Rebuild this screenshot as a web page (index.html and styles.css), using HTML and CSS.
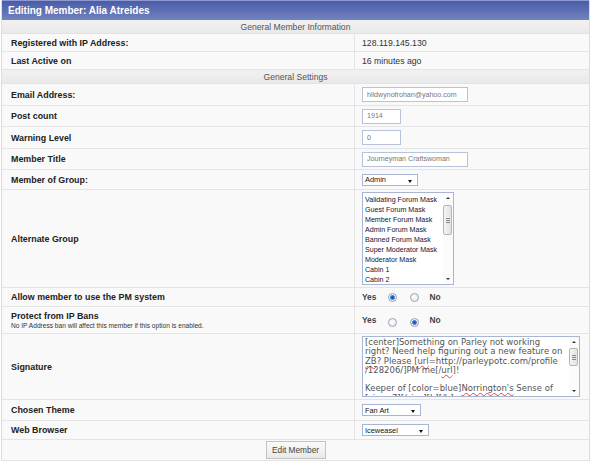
FILE: index.html
```html
<!DOCTYPE html>
<html>
<head>
<meta charset="utf-8">
<title>Editing Member</title>
<link rel="stylesheet" href="styles.css">
</head>
<body>
<div class="panel">
  <div class="title">Editing Member: Alia Atreides</div>
  <div class="section">General Member Information</div>
  <div class="row h18"><div class="label">Registered with IP Address:</div><div class="value">128.119.145.130</div></div>
  <div class="row h18"><div class="label">Last Active on</div><div class="value">16 minutes ago</div></div>
  <div class="section">General Settings</div>
  <div class="row h22"><div class="label">Email Address:</div><div class="value"><div class="input wide">hildwynofrohan@yahoo.com</div></div></div>
  <div class="row h21"><div class="label">Post count</div><div class="value"><div class="input short">1914</div></div></div>
  <div class="row h22"><div class="label">Warning Level</div><div class="value"><div class="input short">0</div></div></div>
  <div class="row h21"><div class="label">Member Title</div><div class="value"><div class="input wide">Journeyman Craftswoman</div></div></div>
  <div class="row h20"><div class="label">Member of Group:</div><div class="value"><div class="select s-admin">Admin<span class="arrow"></span></div></div></div>
  <div class="row h98"><div class="label">Alternate Group</div><div class="value">
    <div class="listbox">
      <div class="items">
        <div>Validating Forum Mask</div>
        <div>Guest Forum Mask</div>
        <div>Member Forum Mask</div>
        <div>Admin Forum Mask</div>
        <div>Banned Forum Mask</div>
        <div>Super Moderator Mask</div>
        <div>Moderator Mask</div>
        <div>Cabin 1</div>
        <div>Cabin 2</div>
      </div>
      <div class="scroll lb-scroll"><span class="up"></span><span class="thumb"><i></i><i></i><i></i></span><span class="down"></span></div>
    </div>
  </div></div>
  <div class="row h19"><div class="label">Allow member to use the PM system</div><div class="value">
    <div class="radios"><span class="opt">Yes</span><span class="radio on"></span><span class="radio"></span><span class="opt no">No</span></div>
  </div></div>
  <div class="row h27"><div class="label stack"><div>Protect from IP Bans</div><div class="note">No IP Address ban will affect this member if this option is enabled.</div></div><div class="value">
    <div class="radios low"><span class="opt">Yes</span><span class="radio"></span><span class="radio on"></span><span class="opt no">No</span></div>
  </div></div>
  <div class="row h66"><div class="label">Signature</div><div class="value">
    <div class="textarea">
      <div class="ta-text">[center]Something on Parley not working
right? Need help figuring out a new feature on
<span class="sp">ZB</span>? Please [<span class="sp">url</span>=http://parleypotc.com/profile
/128206/]PM me[/<span class="sp">url</span>]!

Keeper of [color=blue]<span class="sp">Norrington's</span> Sense of
[size=7][/size][b][/b] mercy</div>
      <div class="scroll ta-scroll"><span class="up"></span><span class="thumb"><i></i><i></i><i></i></span><span class="down"></span></div>
    </div>
  </div></div>
  <div class="row h21"><div class="label">Chosen Theme</div><div class="value"><div class="select s-theme">Fan Art<span class="arrow"></span></div></div></div>
  <div class="row h19"><div class="label">Web Browser</div><div class="value"><div class="select s-browser">Iceweasel<span class="arrow"></span></div></div></div>
  <div class="footer"><button class="btn" type="button">Edit Member</button></div>
</div>
</body>
</html>
```
FILE: styles.css
```css
html, body {
  margin: 0;
  padding: 0;
  background: #ffffff;
}
body {
  font-family: "Liberation Sans", Arial, sans-serif;
  color: #222;
}
.panel {
  margin-left: 1px;
  width: 587px;
  border-left: 1px solid #dcdcdc;
  border-right: 1px solid #dcdcdc;
}
.title {
  height: 20px;
  box-sizing: border-box;
  border-top: 1px solid #8f9bd0;
  background: linear-gradient(#4a5ca7, #7183bf);
  color: #fff;
  font-weight: bold;
  font-size: 10px;
  padding-left: 6px;
  display: flex;
  align-items: center;
}
.section {
  height: 14px;
  box-sizing: border-box;
  border-bottom: 1px solid #e2e2e2;
  background: linear-gradient(#f1f1f1, #e9e9e9);
  color: #555;
  font-size: 8.6px;
  display: flex;
  align-items: center;
  justify-content: center;
}
.row {
  display: grid;
  grid-template-columns: 353px 1fr;
  box-sizing: border-box;
  border-bottom: 1px solid #e4e4e4;
  background: #f9f9f9;
}
.h18 { height: 18px; }
.h19 { height: 19px; }
.h20 { height: 20px; }
.h21 { height: 21px; }
.h22 { height: 22px; }
.h27 { height: 27px; }
.h66 { height: 66px; }
.h98 { height: 98px; }
.label {
  box-sizing: border-box;
  border-right: 1px solid #e4e4e4;
  padding-left: 9px;
  display: flex;
  align-items: center;
  font-weight: bold;
  font-size: 8.9px;
  color: #222;
}
.label.stack {
  flex-direction: column;
  align-items: flex-start;
  justify-content: center;
}
.note {
  font-weight: normal;
  font-size: 6.6px;
  color: #333;
  margin-top: 1px;
}
.value {
  padding-left: 7px;
  display: flex;
  align-items: center;
  font-size: 8.7px;
  color: #333;
}
.input {
  box-sizing: border-box;
  height: 15px;
  border: 1px solid #b8c1dd;
  background: #fff;
  color: #777;
  font-size: 7.1px;
  padding-left: 4px;
  display: flex;
  align-items: center;
}
.input.wide { width: 106px; }
.input.short { width: 39px; }
.select {
  position: relative;
  box-sizing: border-box;
  height: 12px;
  border: 1px solid #a9b6d3;
  background: #fff;
  color: #111;
  font-size: 7.4px;
  padding-left: 2px;
  display: flex;
  align-items: center;
}
.s-admin { width: 56px; }
.s-theme { width: 59px; }
.s-browser { width: 67px; }
.arrow {
  position: absolute;
  right: 5px;
  top: 5px;
  width: 0;
  height: 0;
  border-left: 2.5px solid transparent;
  border-right: 2.5px solid transparent;
  border-top: 3px solid #111;
}
.listbox {
  box-sizing: border-box;
  width: 92px;
  height: 93px;
  border: 1px solid #a9b6d3;
  background: #fff;
  display: flex;
  overflow: hidden;
}
.items {
  flex: 1;
  padding: 2px 0 0 2px;
  font-size: 7.1px;
  line-height: 10px;
  color: #141433;
  white-space: nowrap;
  overflow: hidden;
}
.scroll {
  width: 10px;
  position: relative;
  background: #fbfbfb;
  flex: none;
}
.scroll .up, .scroll .down {
  position: absolute;
  left: 3px;
  width: 0;
  height: 0;
  border-left: 2px solid transparent;
  border-right: 2px solid transparent;
}
.scroll .up { top: 4px; border-bottom: 2px solid #333; }
.scroll .down { bottom: 4px; border-top: 2px solid #333; }
.scroll .thumb {
  position: absolute;
  left: 0;
  width: 9px;
  box-sizing: border-box;
  border: 1px solid #b5b5b5;
  border-radius: 2px;
  background: linear-gradient(90deg, #f4f4f4, #e2e2e2);
  display: flex;
  flex-direction: column;
  align-items: center;
  justify-content: center;
  gap: 1px;
}
.scroll .thumb i {
  display: block;
  width: 4px;
  height: 1px;
  background: #888;
}
.lb-scroll .thumb { top: 12px; height: 30px; }
.ta-scroll .thumb { top: 11px; height: 18px; }
.radios {
  display: flex;
  align-items: center;
}
.radios.low .radio { margin-top: 5px; }
.opt {
  font-weight: bold;
  font-size: 8.4px;
  color: #444;
}
.radio {
  box-sizing: border-box;
  width: 9px;
  height: 9px;
  border-radius: 50%;
  border: 1px solid #97a3b5;
  background: radial-gradient(circle at 40% 40%, #ffffff, #dfe3e8);
  margin-left: 12px;
}
.radio + .radio { margin-left: 13px; }
.radio.on {
  background: radial-gradient(circle, #0b3f9e 0, #2f7ad8 1.6px, #6aa3e6 2.4px, #f3f5f8 2.6px, #dfe3e8 100%);
}
.opt.no { margin-left: 10px; }
.textarea {
  box-sizing: border-box;
  width: 218px;
  height: 61px;
  border: 1px solid #a9b6d3;
  background: #fff;
  display: flex;
  overflow: hidden;
}
.ta-text {
  flex: 1;
  padding: 1px 0 0 2px;
  font-family: "DejaVu Sans", Verdana, sans-serif;
  font-size: 8.5px;
  line-height: 9.3px;
  color: #555;
  white-space: pre;
  overflow: hidden;
}
.sp {
  text-decoration: underline wavy #e84040;
  text-decoration-thickness: 1px;
  text-underline-offset: 1px;
}
.footer {
  height: 21px;
  box-sizing: border-box;
  border-bottom: 1px solid #e4e4e4;
  background: #f9f9f9;
  display: flex;
  align-items: center;
  justify-content: center;
}
.btn {
  box-sizing: border-box;
  width: 60px;
  height: 18px;
  margin: 0;
  padding: 0;
  border: 1px solid #c2c2c2;
  background: linear-gradient(#fafafa, #e9e9e9);
  font-family: "Liberation Sans", Arial, sans-serif;
  font-size: 8.3px;
  color: #444;
}
```
